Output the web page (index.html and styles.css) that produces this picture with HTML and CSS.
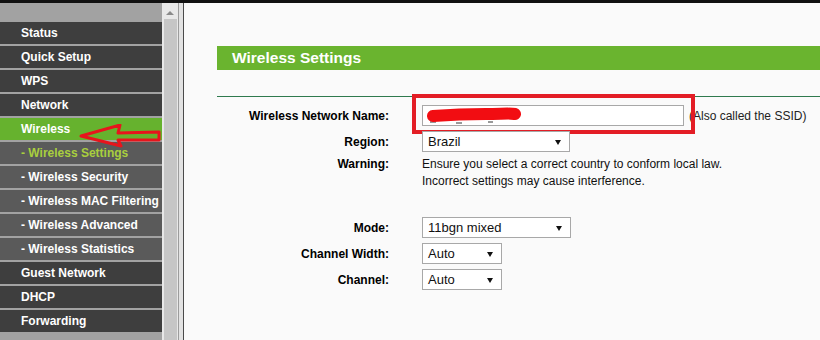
FILE: index.html
```html
<!DOCTYPE html>
<html lang="en">
<head>
    <meta charset="UTF-8">
    <meta name="viewport" content="width=device-width, initial-scale=1.0">
    <title>Wireless Settings</title>
    <link rel="stylesheet" href="styles.css">
</head>
<body>
    <div class="topbar"></div>
    <div class="frame">
        <div class="sidebar">
            <ul class="menu">
                <li>Status</li>
                <li>Quick Setup</li>
                <li>WPS</li>
                <li>Network</li>
                <li class="active">Wireless</li>
                <li class="sub current">- Wireless Settings</li>
                <li class="sub">- Wireless Security</li>
                <li class="sub">- Wireless MAC Filtering</li>
                <li class="sub">- Wireless Advanced</li>
                <li class="sub">- Wireless Statistics</li>
                <li>Guest Network</li>
                <li>DHCP</li>
                <li>Forwarding</li>
            </ul>
            <!-- 빨간 화살표 표시 -->
            <svg class="arrow" width="90" height="30" viewBox="0 0 90 30">
                <polygon points="2,12 41,1 39,9 80,8 80,16 39,16 42,22" fill="none" stroke="#e8141c" stroke-width="3" stroke-linejoin="round"/>
            </svg>
        </div>
        <div class="scroll">
            <div class="scroll-up"><i></i></div>
            <div class="thumb"></div>
        </div>
        <div class="divider"></div>

        <div class="main">
            <div class="title">Wireless Settings</div>
            <div class="line"></div>

            <div class="row">
                <div class="label">Wireless Network Name:</div>
                <div class="value">
                    <div class="ssid">
                        <div class="field wide">
                            <svg class="scribble" width="96" height="17" viewBox="0 0 96 17">
                                <path d="M4,15 L10,15 M30,16 L36,16 M62,15 L67,15" stroke="#333" stroke-width="1"/>
                                <path d="M7,9 C20,8 40,7 60,7 C75,7 84,6 89,7" fill="none" stroke="#f20d12" stroke-width="12" stroke-linecap="round"/>
                            </svg>
                        </div>
                        <div class="mark"></div>
                    </div>
                    <span class="note">(Also called the SSID)</span>
                </div>
            </div>

            <div class="row">
                <div class="label">Region:</div>
                <div class="value">
                    <div class="field select region">Brazil<i class="caret"></i></div>
                </div>
            </div>

            <div class="row warning">
                <div class="label">Warning:</div>
                <div class="value">
                    Ensure you select a correct country to conform local law.<br>
                    Incorrect settings may cause interference.
                </div>
            </div>

            <div class="row mode">
                <div class="label">Mode:</div>
                <div class="value">
                    <div class="field select mode-box">11bgn mixed<i class="caret"></i></div>
                </div>
            </div>

            <div class="row">
                <div class="label">Channel Width:</div>
                <div class="value">
                    <div class="field select small">Auto<i class="caret"></i></div>
                </div>
            </div>

            <div class="row">
                <div class="label">Channel:</div>
                <div class="value">
                    <div class="field select small">Auto<i class="caret"></i></div>
                </div>
            </div>
        </div>
    </div>
</body>
</html>
```

FILE: styles.css
```css
body {
    margin: 0;
    background-color: #fafafa;
    font-family: "Liberation Sans", Arial, sans-serif;
    overflow: hidden;
}

div.topbar {
    height: 3px;
    background-color: #111;
}

div.frame {
    display: flex;
    height: 337px;
}

/* 왼쪽 메뉴 */
div.sidebar {
    position: relative;
    width: 162px;
    flex-shrink: 0;
    padding-top: 19px;
    background-color: #a2a2a2;
}

ul.menu {
    margin: 0;
    padding: 0;
    list-style: none;
}

ul.menu li {
    height: 22px;
    line-height: 22px;
    margin-bottom: 2px;
    padding-left: 21px;
    background-color: #3e3e3e;
    color: white;
    font-size: 12px;
    font-weight: bold;
    white-space: nowrap;
}

ul.menu li.sub {
    background-color: #5a5a5a;
}

ul.menu li.active {
    background-color: #66b22e;
}

ul.menu li.current {
    color: #a9cf3e;
}

svg.arrow {
    position: absolute;
    left: 79px;
    top: 121px;
}

/* 스크롤바 */
div.scroll {
    width: 16px;
    flex-shrink: 0;
    display: flex;
    flex-direction: column;
    background-color: #e8e8e8;
}

div.scroll-up {
    height: 16px;
    display: flex;
    justify-content: center;
    padding-top: 8px;
    box-sizing: border-box;
}

div.scroll-up i {
    width: 0;
    height: 0;
    border-left: 4px solid transparent;
    border-right: 4px solid transparent;
    border-bottom: 4px solid #8a8a8a;
}

div.thumb {
    flex: 1;
    margin: 0 1px 0 2px;
    background-color: #c6c6c6;
}

div.divider {
    width: 4px;
    flex-shrink: 0;
    background-color: #e2e2e2;
    border-left: 1px solid #9c9c9c;
    border-right: 1px solid #4a4a4a;
}

/* 본문 */
div.main {
    flex: 1;
    padding: 43px 0 0 33px;
    font-size: 12px;
    color: #111;
}

div.title {
    height: 24px;
    line-height: 24px;
    padding-left: 15px;
    background-color: #6ab42f;
    color: white;
    font-size: 15.5px;
    font-weight: bold;
}

div.line {
    height: 1px;
    margin-top: 26px;
    margin-bottom: 8px;
    background-color: #2f7a4e;
}

div.row {
    display: grid;
    grid-template-columns: 172px 1fr;
    column-gap: 33px;
    align-items: center;
    margin-bottom: 5px;
}

div.row div.label {
    text-align: right;
    font-weight: bold;
    color: #000;
}

div.row div.value {
    display: flex;
    align-items: center;
}

div.row.warning {
    align-items: start;
    line-height: 17px;
    margin-top: -1px;
}

div.row.warning div.value {
    display: block;
}

div.row.mode {
    margin-top: 27px;
}

div.field {
    height: 21px;
    box-sizing: border-box;
    border: 1px solid #a8a8a8;
    background-color: white;
    padding-left: 5px;
    font-size: 13px;
    line-height: 19px;
    color: #111;
}

div.field.wide {
    width: 262px;
    padding-top: 1px;
    padding-left: 3px;
}

svg.scribble {
    display: block;
}

div.ssid {
    position: relative;
}

/* 빨간 네모 표시 */
div.mark {
    position: absolute;
    left: -10px;
    right: -11px;
    top: -11px;
    bottom: -8px;
    border: 4px solid #e31d25;
}

span.note {
    margin-left: 5px;
    color: #222;
}

div.select {
    position: relative;
}

div.select.region {
    width: 148px;
}

div.select.mode-box {
    width: 149px;
}

div.select.small {
    width: 80px;
}

i.caret {
    position: absolute;
    right: 8px;
    top: 8px;
    width: 0;
    height: 0;
    border-left: 3px solid transparent;
    border-right: 3px solid transparent;
    border-top: 5px solid #111;
}
```
